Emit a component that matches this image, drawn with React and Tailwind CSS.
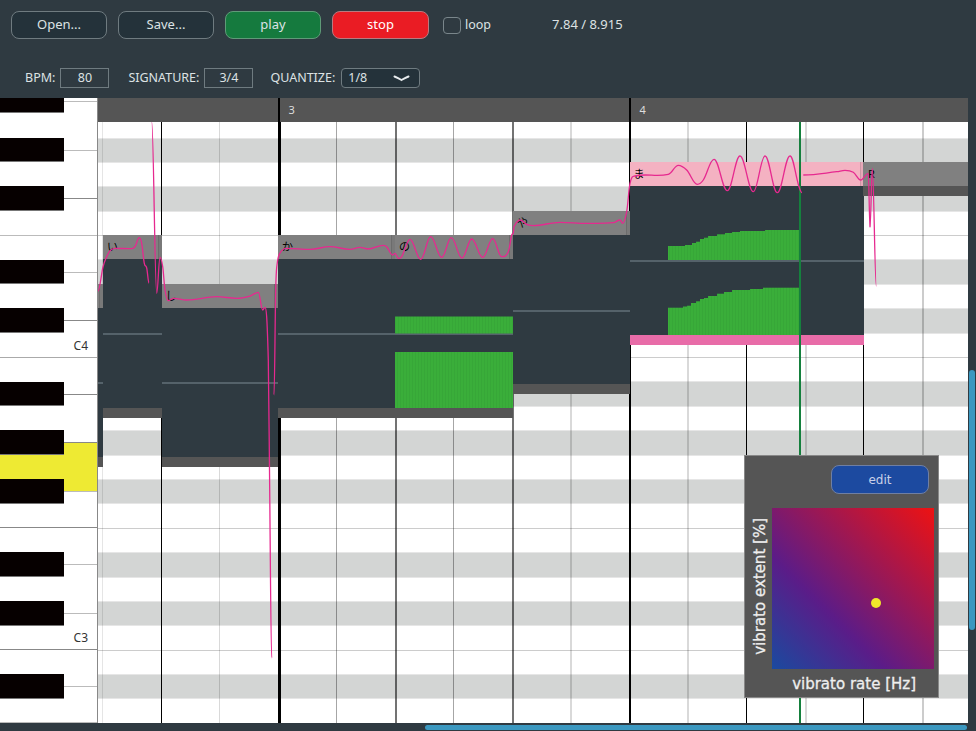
const uiFont = { fontFamily: '"Noto Sans", "DejaVu Sans", sans-serif' };

// white keys from top to bottom, black keys sit on top of them
const whiteKeys = [
  { h: 4, line: 'border-[#bbbbbb]' },
  { h: 49, line: 'border-[#bbbbbb]' },
  { h: 48, line: 'border-[#888888]' },
  { h: 37, line: 'border-[#bbbbbb]' },
  { h: 37, line: 'border-[#bbbbbb]' },
  { h: 48, line: 'border-[#888888]' },
  { h: 37, line: 'border-[#aaaaaa]', label: 'C4' },
  { h: 37, line: 'border-[#888888]' },
  { h: 48, line: 'border-[#888888]' },
  { h: 49, line: 'border-[#bbbbbb]', active: true },
  { h: 36, line: 'border-[#888888]' },
  { h: 37, line: 'border-[#bbbbbb]' },
  { h: 49, line: 'border-[#bbbbbb]' },
  { h: 36, line: 'border-[#888888]', label: 'C3' },
  { h: 37, line: 'border-[#bbbbbb]' },
  { h: 36, line: 'border-[#bbbbbb]' },
];

const blackKeyTops = [0, 39.5, 88.4, 161.6, 210.4, 283.6, 332.4, 381.2, 454.4, 503.2, 576.4];

const rowPattern = 'gwgwwgwgwwgwgwgwwgwgwwgw';

const beatLines = [
  'border-black/10',
  'border-black',
  'border-black/15',
  'border-l-[3px] border-black',
  'border-black/35',
  'border-l-2 border-black/55',
  'border-black/35',
  'border-l-2 border-black/55',
  'border-l-2 border-black/15',
  'border-l-2 border-black',
  'border-l-2 border-black/15',
  'border-black',
  'border-l-2 border-black/15',
  'border-black',
  'border-l-2 border-black/20',
];

// x/w/top in page pixels, minus the grid origin when drawn
const notes = [
  { lyric: '', x: 98, w: 5, top: 284, foot: 457, mid: 382 },
  { lyric: 'い', x: 103, w: 58.5, top: 235, foot: 408, mid: 333 },
  { lyric: 'し', x: 161.5, w: 116.5, top: 284, foot: 457, mid: 382 },
  { lyric: 'か', x: 278, w: 117, top: 235, foot: 408, mid: 333 },
  { lyric: 'の', x: 395, w: 118, top: 235, foot: 408, mid: 333 },
  { lyric: 'や', x: 513, w: 116.5, top: 211, foot: 384, mid: 310 },
  { lyric: 'ま', x: 629.5, w: 234, top: 162, foot: 335, mid: 260, selected: true },
];

const curves = [
  [[98, 291], [103, 267], [106.7, 256.7], [110, 250.7], [115, 248.3], [131.7, 248.7], [135, 246.7], [139.3, 237.7], [141.7, 243.3], [144.3, 263.3], [146.7, 268], [149, 283]],
  [[151.7, 122], [156.7, 293.3], [160, 257.3], [162.7, 266.7], [165, 290], [168.3, 300.7], [173.3, 298.3], [186.7, 300], [216.7, 296.7], [236.7, 298.3], [250, 296], [258.3, 292.3], [262.7, 310], [265, 307.3], [268.3, 360], [269.5, 470], [271.7, 658]],
  [[274, 395], [275.7, 290], [277, 265], [280, 253], [286.7, 248.3], [310, 249.3], [330, 246.7], [350, 249.3], [360, 247.3], [368, 249], [383.3, 245.3], [386.7, 246.7], [392.7, 255], [395, 253.3], [398.3, 258.3], [401.7, 256.7], [410, 239.3], [420.7, 259.3], [430.7, 236.7], [441.7, 257.3], [451.3, 237.7], [462, 258], [471.7, 239], [482.7, 257.3], [492.7, 238.7], [501.7, 256.7], [508.3, 251.7], [511.7, 235], [513.3, 233], [514, 226.7], [520, 220], [526.7, 224.3], [533.3, 225.7], [560, 222.3], [586.7, 223.3], [613.3, 222.7], [620, 220], [622.7, 223.3], [626.7, 211.7], [630, 183.3], [635, 176], [668.3, 174.3], [678.3, 165.3], [686.7, 170], [697.3, 184.3], [703.3, 180], [714, 159.3], [727.3, 190.7], [740, 156], [753.3, 191.7], [765, 156], [777.3, 192.7], [790, 156], [799, 186.7], [802, 192.7]],
  [[803.3, 175], [836.7, 171.7], [845, 170.3], [853.3, 172.3], [860.7, 180], [868.3, 173.3]],
  [[868.3, 173.3], [870, 227.3]],
  [[870, 227.3], [872.3, 168.3]],
  [[872.3, 168.3], [876.3, 286]],
];

// smooth line through the points, flat at peaks and dips
const toPath = (pts) => {
  const slope = (i) => {
    const a = pts[i - 1];
    const b = pts[i];
    const c = pts[i + 1];
    if (!a || !c) return 0;
    if ((b[1] - a[1]) * (c[1] - b[1]) <= 0) return 0;
    return (c[1] - a[1]) / (c[0] - a[0]);
  };
  let d = `M${pts[0][0]} ${pts[0][1]}`;
  for (let i = 0; i < pts.length - 1; i++) {
    const p1 = pts[i];
    const p2 = pts[i + 1];
    const dx = (p2[0] - p1[0]) * 0.38;
    d += `C${p1[0] + dx} ${p1[1] + slope(i) * dx} ${p2[0] - dx} ${p2[1] - slope(i + 1) * dx} ${p2[0]} ${p2[1]}`;
  }
  return d;
};

// [until x, top y] steps of the vibrato strength graphs
const steps = (list, from, to, base) => {
  const bars = [];
  for (let x = from; x < to; x++) {
    const step = list.find((s) => x < s[0]) || list[list.length - 1];
    bars.push({ x, y: step[1], h: base - step[1] });
  }
  return bars;
};

const greenBars = [
  ...steps([[513, 316.5]], 395, 513, 333.5),
  ...steps([[513, 352]], 395, 513, 408),
  ...steps([[685, 246], [692, 245], [696, 243], [700, 241.7], [704, 239], [708, 237.7], [717, 236], [725, 234.3], [732, 233], [740, 232], [765, 231], [800, 230]], 668, 800, 260),
  ...steps([[683, 307.7], [687, 306.5], [691, 305.7], [696, 303], [700, 301.3], [704, 299], [708, 298], [717, 296], [724, 293.7], [732, 292], [750, 290], [763, 289], [800, 287.7]], 668, 800, 335),
];

const Key = ({ k }) => (
  <div
    className={`border-b ${k.line} ${k.active ? 'bg-[#eeea33]' : 'bg-white'} flex items-end justify-end`}
    style={{ height: k.h }}
  >
    {k.label && <span className="text-[12px] leading-none text-[#333] pr-[9px] pb-[5px]">{k.label}</span>}
  </div>
);

const Piano = () => (
  <div className="relative w-[98px] shrink-0 border-r border-[#888888] overflow-hidden bg-white">
    {whiteKeys.map((k, i) => <Key key={i} k={k} />)}
    {blackKeyTops.map((t, i) => (
      <div
        key={t}
        className="absolute left-0 w-16 bg-[#060000] border-b border-[#777777]"
        style={{ top: i === 0 ? 0 : t, height: i === 0 ? 15 : 24.4 }}
      />
    ))}
  </div>
);

const Note = ({ n }) => {
  const left = n.x - 98;
  return (
    <div className="absolute flex flex-col" style={{ left, top: n.top - 98, width: n.w, height: n.foot + 10 - n.top }}>
      <div className={`relative h-[24.4px] shrink-0 ${n.selected ? 'bg-[#f4b2c2]' : 'bg-[#808080]'}`}>
        <span className="absolute left-[4px] top-[6px] text-[11px] leading-none text-black" style={{ fontFamily: '"Noto Sans CJK JP", sans-serif' }}>
          {n.lyric}
        </span>
        <div className="absolute right-0 top-0 bottom-0 w-[4px] bg-black/5 border-l border-black/10" />
      </div>
      <div className="relative grow bg-[#2f3a41]">
        <div className="absolute left-0 right-0 h-[2px] bg-[#55626a]" style={{ top: n.mid - n.top - 24 }} />
      </div>
      <div className={`h-[10px] shrink-0 ${n.selected ? 'bg-[#e86ca8]' : 'bg-[#555555]'}`} />
    </div>
  );
};

const Drawing = () => (
  <svg className="absolute inset-0 w-[870px] h-[625px] pointer-events-none" viewBox="98 98 870 625">
    {greenBars.map((b, i) => (
      <rect key={i} x={b.x} y={b.y} width={1} height={b.h} fill={i % 3 === 0 ? '#37a738' : '#3aae3a'} />
    ))}
    <rect x="799" y="122" width="2" height="601" fill="#15803d" />
    {curves.map((c, i) => (
      <path key={i} d={toPath(c)} fill="none" stroke="#e6298f" strokeWidth="1.3" />
    ))}
  </svg>
);

const VibratoPanel = () => (
  <div className="absolute left-[646px] top-[357px] w-[195px] h-[243px] bg-[#555555] border border-[#888888] flex flex-col pl-[7px] pr-[3px] pt-[9px]" style={{ fontFamily: '"DejaVu Sans", sans-serif' }}>
    <button className="self-end mr-[6px] w-[98px] h-[29px] rounded-lg bg-[#1c4aa0] border border-[#6f7fa3] text-[12px] text-[#c8d0e8]">
      edit
    </button>
    <div className="flex mt-[14px]">
      <div className="w-[16px] flex items-center justify-center">
        <span className="[writing-mode:vertical-rl] rotate-180 mb-[4px] text-[15px] [-webkit-text-stroke:0.3px_#eeeeee] text-[#eeeeee] whitespace-nowrap leading-none">
          vibrato extent [%]
        </span>
      </div>
      <div className="relative ml-[4px] w-[162px] h-[161px] bg-linear-to-tr/srgb from-[#1a4a9f] via-[#5b1c88] via-35% to-[#ee1212]">
        <div className="absolute left-[99px] top-[90px] w-[10px] h-[10px] rounded-full bg-[#f0e82a]" />
      </div>
    </div>
    <div className="mt-[8px] pr-[19px] text-right text-[15px] [-webkit-text-stroke:0.3px_#eeeeee] text-[#eeeeee] whitespace-nowrap leading-none">
      vibrato rate [Hz]
    </div>
  </div>
);

const Roll = () => (
  <div className="relative w-[870px] shrink-0 overflow-hidden bg-white">
    <div className="relative z-10 flex h-6 bg-[#555555] text-[11px] text-[#dddddd]">
      <div className="w-[179.5px]" />
      <div className="w-[351px] border-l-2 border-black pl-[9px] leading-6">3</div>
      <div className="grow border-l-2 border-black pl-[9px] leading-6">4</div>
    </div>
    <div className="h-[15.5px]" />
    {rowPattern.split('').map((c, i) => (
      <div
        key={i}
        className={`h-[24.4px] border-t ${c === 'g' ? 'bg-[#d3d5d4] border-[#e6e6e6]' : i > 0 && rowPattern[i - 1] === 'w' ? 'bg-white border-[#cccccc]' : 'bg-white border-[#e6e6e6]'}`}
      />
    ))}
    <div className="absolute left-[4px] top-6 bottom-0 flex">
      {beatLines.map((cls, i) => (
        <div key={i} className={`w-[58.55px] shrink-0 border-l ${cls}`} />
      ))}
    </div>
    {notes.map((n) => <Note key={n.x} n={n} />)}
    <div className="absolute left-[765px] top-[64px] w-[105px] flex flex-col">
      <div className="relative h-[24.4px] bg-[#808080]">
        <span className="absolute left-[5px] top-[6px] text-[11px] leading-none text-black" style={uiFont}>R</span>
      </div>
      <div className="h-[10px] bg-[#555555]" />
    </div>
    <Drawing />
    <VibratoPanel />
  </div>
);

const ToolButton = ({ className, children }) => (
  <button className={`w-[96px] h-[28px] rounded-lg border text-[13px] ${className}`}>{children}</button>
);

const BoxField = ({ label, value }) => (
  <div className="flex items-center">
    <span className="text-[12.5px]">{label}</span>
    <div className="ml-[5px] w-[49px] h-[20px] border border-[#6f7b80] text-center text-[12.5px] leading-[18px]">{value}</div>
  </div>
);

const Toolbar = () => (
  <div className="h-[98px] shrink-0 text-[#dde2e4]" style={uiFont}>
    <div className="flex items-center gap-[11px] pt-[11px] pl-[11px]">
      <ToolButton className="bg-[#24323a] border-[#6f7b80]">Open...</ToolButton>
      <ToolButton className="bg-[#24323a] border-[#6f7b80]">Save...</ToolButton>
      <ToolButton className="bg-[#157a3e] border-[#5f9a78]">play</ToolButton>
      <ToolButton className="bg-[#ea1c24] border-[#b97a80] text-white w-[97px]">stop</ToolButton>
      <label className="flex items-center ml-[3px] text-[12.5px]">
        <span className="w-[18px] h-[17px] rounded-[4px] border border-[#7a868b]" />
        <span className="ml-[4px]">loop</span>
      </label>
      <span className="ml-[50px] text-[13px]">7.84 / 8.915</span>
    </div>
    <div className="flex items-center mt-[29px] pl-[25px]">
      <BoxField label="BPM:" value="80" />
      <div className="ml-[19px]">
        <BoxField label="SIGNATURE:" value="3/4" />
      </div>
      <span className="ml-[17px] text-[12.5px]">QUANTIZE:</span>
      <div className="ml-[6px] w-[79px] h-[20px] rounded-[4px] border border-[#6f7b80] bg-[#24323a] flex items-center justify-between pl-[6px] pr-[9px] text-[12.5px]">
        1/8
        <svg width="17" height="7" viewBox="0 0 17 7">
          <path d="M1.500 1.500Q5 3 8.500 5Q12 3 15.500 1.500" fill="none" stroke="#e8ecee" strokeWidth="2" strokeLinecap="round" />
        </svg>
      </div>
    </div>
  </div>
);

export default function App() {
  return (
    <div className="w-[976px] h-[731px] overflow-hidden bg-[#2f3a41] flex flex-col">
      <Toolbar />
      <div className="flex h-[625px] shrink-0">
        <Piano />
        <Roll />
        <div className="grow pt-[272px] pl-[1px] pr-[1px]">
          <div className="h-[260px] rounded-sm bg-[#3b98c0]" />
        </div>
      </div>
      <div className="pl-[425px] pr-[9px] pt-[2px]">
        <div className="h-[5px] rounded-full bg-[#3b98c0]" />
      </div>
    </div>
  );
}
